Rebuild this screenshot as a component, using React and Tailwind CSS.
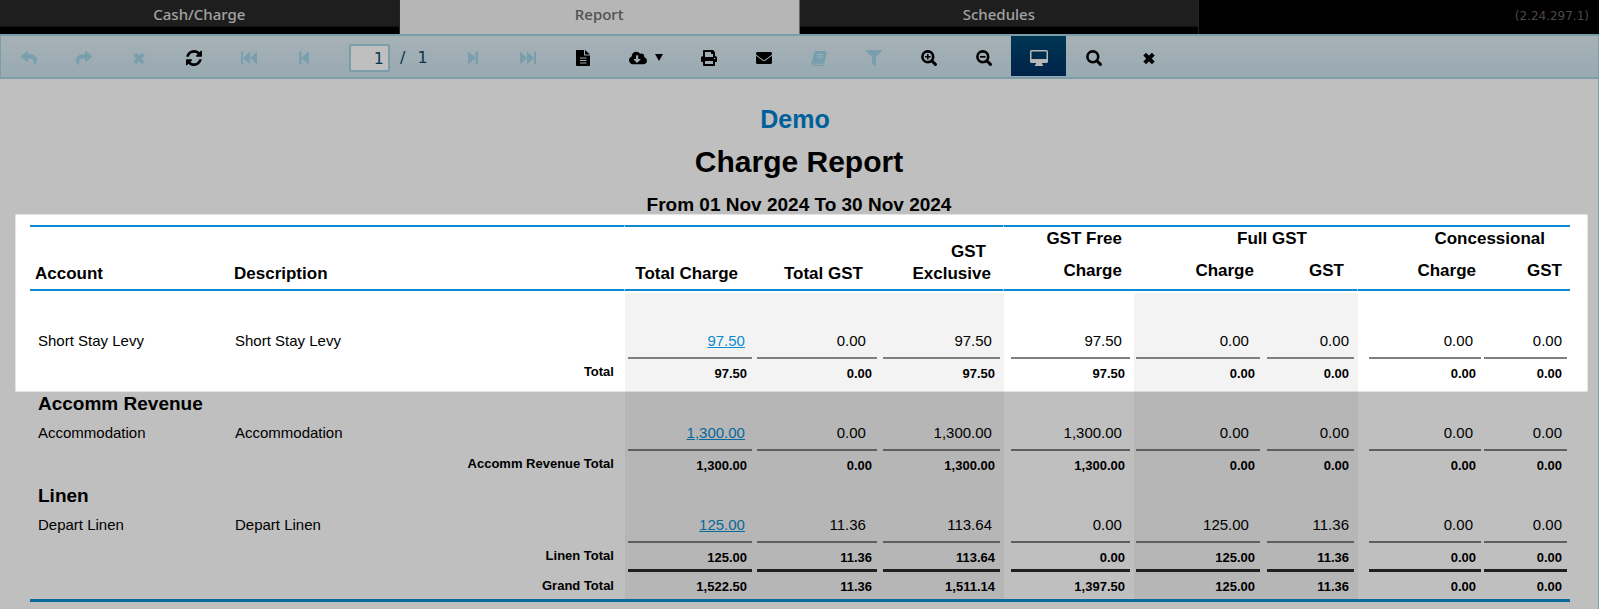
import clsx from 'clsx';
import { FaCloudDownloadAlt, FaEnvelope, FaFilter, FaPrint, FaReply, FaShare } from 'react-icons/fa';

const TABS = [
  { label: 'Cash/Charge' },
  { label: 'Report', active: true },
  { label: 'Schedules' },
];

// One entry per amount column. `rule` insets the underline, `amount` insets the figure above it.
const COLUMNS = [
  { width: 'w-[130px]', rule: 'px-[3px]', amount: 'pr-[7px]', shaded: true },
  { width: 'w-[125px]', rule: 'pl-[2px] pr-[3px]', amount: 'pr-[11px]', shaded: true },
  { width: 'w-[124px]', rule: 'pl-[3px] pr-[4px]', amount: 'pr-[8px]', shaded: true },
  { width: 'w-[130px]', rule: 'pl-[7px] pr-[4px]', amount: 'pr-[8px]' },
  { width: 'w-[131px]', rule: 'pl-[2px] pr-[5px]', amount: 'pr-[11px]', shaded: true },
  { width: 'w-[93px]', rule: 'pl-[2px] pr-[4px]', amount: 'pr-[5px]', shaded: true },
  { width: 'w-[125px]', rule: 'pl-[11px] pr-[2px]', amount: 'pr-[8px]' },
  { width: 'w-[87px]', rule: 'pl-[1px] pr-[3px]', amount: 'pr-[5px]' },
];

const GROUPS = [
  {
    title: '',
    account: 'Short Stay Levy',
    description: 'Short Stay Levy',
    amounts: ['97.50', '0.00', '97.50', '97.50', '0.00', '0.00', '0.00', '0.00'],
    totalLabel: 'Total',
  },
  {
    title: 'Accomm Revenue',
    account: 'Accommodation',
    description: 'Accommodation',
    amounts: ['1,300.00', '0.00', '1,300.00', '1,300.00', '0.00', '0.00', '0.00', '0.00'],
    totalLabel: 'Accomm Revenue Total',
  },
  {
    title: 'Linen',
    account: 'Depart Linen',
    description: 'Depart Linen',
    amounts: ['125.00', '11.36', '113.64', '0.00', '125.00', '11.36', '0.00', '0.00'],
    totalLabel: 'Linen Total',
  },
];

const GRAND_TOTAL = ['1,522.50', '11.36', '1,511.14', '1,397.50', '125.00', '11.36', '0.00', '0.00'];

function RefreshIcon(props) {
  return (
    <svg viewBox="0 0 1536 1536" fill="currentColor" {...props}>
      <path d="M1511 928q0 5-1 7-64 268-268 434.5t-478 166.5q-146 0-282.5-55t-243.5-157l-129 129q-19 19-45 19t-45-19-19-45v-448q0-26 19-45t45-19h448q26 0 45 19t19 45-19 45l-137 137q71 66 161 102t187 36q134 0 250-65t186-179q11-17 53-117 8-23 30-23h192q13 0 22.5 9.5t9.5 22.5zm25-800v448q0 26-19 45t-45 19h-448q-26 0-45-19t-19-45 19-45l138-138q-148-137-349-137-134 0-250 65t-186 179q-11 17-53 117-8 23-30 23h-199q-13 0-22.5-9.5t-9.5-22.5v-7q65-268 270-434.5t480-166.5q146 0 284 55.5t245 156.5l130-129q19-19 45-19t45 19 19 45z" />
    </svg>
  );
}

function CrossIcon(props) {
  return (
    <svg viewBox="0 0 16 16" fill="none" stroke="currentColor" strokeWidth="4" {...props}>
      <path d="M3.7 4.2l8.6 8.6M12.3 4.2l-8.6 8.6" />
    </svg>
  );
}

function FirstIcon(props) {
  return (
    <svg viewBox="0 0 18 16" fill="currentColor" {...props}>
      <path d="M1 1.5h2v13H1zM10 1.5v13L3 8zM17 1.5v13L10 8z" />
    </svg>
  );
}

function PreviousIcon(props) {
  return (
    <svg viewBox="0 0 18 16" fill="currentColor" {...props}>
      <path d="M4 1.5h2.5v13H4zM14 1.5v13L6 8z" />
    </svg>
  );
}

function NextIcon(props) {
  return (
    <svg viewBox="0 0 18 16" fill="currentColor" {...props}>
      <path d="M11.5 1.5H14v13h-2.5zM4 1.5v13L12 8z" />
    </svg>
  );
}

function LastIcon(props) {
  return (
    <svg viewBox="0 0 18 16" fill="currentColor" {...props}>
      <path d="M15 1.5h2v13h-2zM8 1.5v13L15 8zM1 1.5v13L8 8z" />
    </svg>
  );
}

function PageIcon(props) {
  return (
    <svg viewBox="0 0 16 16" fill="currentColor" {...props}>
      <path
        fillRule="evenodd"
        d="M1 0h8v5.5h6V15q0 1-1 1H2q-1 0-1-1zM5 7.5v1h6.5v-1zm0 2.5v1h6.5v-1zm0 2.5v1h6.5v-1z"
      />
      <path d="M10 0l5 4.5h-5z" />
    </svg>
  );
}

function CaretIcon(props) {
  return (
    <svg viewBox="0 0 8 8" fill="currentColor" {...props}>
      <path d="M0 0h8L4 7z" />
    </svg>
  );
}

function BookIcon(props) {
  return (
    <svg viewBox="0 0 16 16" fill="currentColor" {...props}>
      <path
        fillRule="evenodd"
        d="M5 1h9.5q1.500 0 1.200 1.500L13 12.500q-.3 1.200-1.500 1.200H2.800q-.6 0-.4.700.1.400.8.400h9L15 5.500v1L13 15q-.3 1-1.500 1h-9Q.3 16 .3 13.500l3-11Q3.700 1 5 1zM6.300 4L6 5h6.500l.3-1zM5.600 6.500l-.3 1h6.500l.3-1z"
      />
    </svg>
  );
}

function LensIcon({ children, ...props }) {
  return (
    <svg viewBox="0 0 16 16" fill="none" stroke="currentColor" {...props}>
      <circle cx="6.8" cy="6.8" r="5.4" strokeWidth="2.6" />
      <path d="M10.8 10.8l3.600 3.600" strokeWidth="3" strokeLinecap="round" />
      {children}
    </svg>
  );
}

function ZoomInIcon(props) {
  return (
    <LensIcon {...props}>
      <path d="M4 6.8h5.600M6.800 4v5.600" strokeWidth="1.5" />
    </LensIcon>
  );
}

function ZoomOutIcon(props) {
  return (
    <LensIcon {...props}>
      <path d="M4 6.8h5.600" strokeWidth="1.7" />
    </LensIcon>
  );
}

function ScreenIcon(props) {
  return (
    <svg viewBox="0 0 18 16" fill="currentColor" {...props}>
      <path
        fillRule="evenodd"
        d="M1.5 0h15Q18 0 18 1.500v10q0 1.500-1.500 1.500H12v1.500h1V16H5v-1.500h1V13H1.500Q0 13 0 11.500v-10Q0 0 1.500 0zM1.500 1.500V9h15V1.500z"
      />
    </svg>
  );
}

function TabBar() {
  return (
    <nav className="grid h-[34px] grid-cols-4 bg-black font-['Noto_Sans',sans-serif] text-[15px]">
      {TABS.map(({ label, active }) => (
        <a
          key={label}
          href="#"
          className={clsx(
            'flex justify-center border-r pt-[3px] font-medium',
            active
              ? 'border-[#8a8a8a] bg-[#f3f3f3] text-[#6c6c6c]'
              : 'border-[#303030] bg-linear-to-b from-[#292929] from-75% to-black to-85% text-[#d8d8d8]',
          )}
        >
          {label}
        </a>
      ))}
      <span className="pt-2 pr-[10px] text-right font-['DejaVu_Sans',sans-serif] text-xs text-[#685f5f]">
        (2.24.297.1)
      </span>
    </nav>
  );
}

function ToolButton({ icon: Icon, label, disabled, active, children }) {
  return (
    <button
      type="button"
      aria-label={label}
      disabled={disabled}
      className={clsx(
        'flex h-10 items-center justify-center gap-2 pt-1',
        children ? 'w-[71px]' : 'w-[55px]',
        disabled && 'text-[#a2d3e8]',
        active && 'bg-linear-to-b from-[#00486e] to-[#003064] text-[#f4f4f4]',
      )}
    >
      <Icon className="h-4 w-[18px]" />
      {children}
    </button>
  );
}

function Toolbar() {
  return (
    <div className="flex h-[45px] items-start border-x border-y-2 border-[#a4d0e2] bg-linear-to-b from-[#deedf4] to-[#cce3ed] text-black">
      <ToolButton icon={FaReply} label="Back" disabled />
      <ToolButton icon={FaShare} label="Forward" disabled />
      <ToolButton icon={CrossIcon} label="Stop" disabled />
      <ToolButton icon={RefreshIcon} label="Refresh" />
      <ToolButton icon={FirstIcon} label="First page" disabled />
      <ToolButton icon={PreviousIcon} label="Previous page" disabled />
      <div className="flex h-10 w-[114px] items-center gap-[10px] pt-1 pl-[18px] font-['DejaVu_Sans',sans-serif] text-base text-[#0c4a66]">
        <input
          type="text"
          aria-label="Current page"
          defaultValue="1"
          className="h-7 w-[41px] rounded-xs border-2 border-[#a4d0e2] bg-white pr-1 text-right"
        />
        <span className="flex gap-3">
          <span>/</span>
          <span>1</span>
        </span>
      </div>
      <ToolButton icon={NextIcon} label="Next page" disabled />
      <ToolButton icon={LastIcon} label="Last page" disabled />
      <ToolButton icon={PageIcon} label="Page view" />
      <ToolButton icon={FaCloudDownloadAlt} label="Export">
        <CaretIcon className="size-2" />
      </ToolButton>
      <ToolButton icon={FaPrint} label="Print" />
      <ToolButton icon={FaEnvelope} label="Send by email" />
      <ToolButton icon={BookIcon} label="Document map" disabled />
      <ToolButton icon={FaFilter} label="Parameters" disabled />
      <ToolButton icon={ZoomInIcon} label="Zoom in" />
      <ToolButton icon={ZoomOutIcon} label="Zoom out" />
      <ToolButton icon={ScreenIcon} label="Full screen" active />
      <ToolButton icon={LensIcon} label="Search" />
      <ToolButton icon={CrossIcon} label="Close" />
    </div>
  );
}

function AmountCells({ values, ruled, link }) {
  return COLUMNS.map(({ rule, amount, shaded }, i) => (
    <td key={i} className={clsx('p-0 text-right', rule, shaded && 'bg-[#f3f3f3]')}>
      <div
        className={clsx(
          ruled ? 'border-b-2 border-[#7f7f7f] pb-[6px]' : 'pt-[5px] pr-[5px]',
          ruled && amount,
        )}
      >
        {link && i === 0 ? (
          <a href="#" className="text-[#0d8bd0] underline">
            {values[i]}
          </a>
        ) : (
          values[i]
        )}
      </div>
    </td>
  ));
}

function ReportGroup({ title, account, description, amounts, totalLabel }) {
  return (
    <>
      <tr className="h-[34px]">
        <th colSpan={2} scope="rowgroup" className="pt-1 pl-2 text-left text-[19px] leading-6 font-bold">
          {title}
        </th>
        {COLUMNS.map(({ shaded }, i) => (
          <td key={i} className={clsx(shaded && 'bg-[#f3f3f3]')} />
        ))}
      </tr>
      <tr className="h-8 align-bottom text-[15px] leading-5">
        <td className="pb-2 pl-2">{account}</td>
        <td className="pb-2 pl-[6px]">{description}</td>
        <AmountCells values={amounts} ruled link />
      </tr>
      <tr className="h-[26px] align-top text-[13px] leading-5 font-bold">
        <th colSpan={2} scope="row" className="pt-[3px] pr-[11px] text-right">
          {totalLabel}
        </th>
        <AmountCells values={amounts} />
      </tr>
    </>
  );
}

function ReportTable() {
  return (
    <table className="w-full table-fixed border-separate border-spacing-0">
      <colgroup>
        <col className="w-[199px]" />
        <col />
        {COLUMNS.map(({ width }, i) => (
          <col key={i} className={width} />
        ))}
      </colgroup>
      <thead className="text-[17px] leading-[22px] [&_th]:border-[#0d8bd0]">
        <tr className="h-[34px]">
          <th rowSpan={2} className="border-y-2 pb-1 pl-[5px] text-left align-bottom">Account</th>
          <th rowSpan={2} className="border-y-2 border-r border-r-white! pb-1 pl-[5px] text-left align-bottom">Description</th>
          <th rowSpan={2} className="border-y-2 pr-[17px] pb-1 text-right align-bottom">Total Charge</th>
          <th rowSpan={2} className="border-y-2 pr-[17px] pb-1 text-right align-bottom">Total GST</th>
          <th rowSpan={2} className="border-y-2 border-r border-r-white! pr-3 pb-1 text-right align-bottom">
            <span className="block pr-[5px]">GST</span>
            Exclusive
          </th>
          <th className="border-t-2 pt-px pr-3 text-right align-top">GST Free</th>
          <th colSpan={2} className="border-t-2 pt-px pr-[51px] text-right align-top">Full GST</th>
          <th colSpan={2} className="border-t-2 pt-px pr-[25px] text-right align-top">Concessional</th>
        </tr>
        <tr className="h-8">
          <th className="border-b-2 pt-px pr-3 text-right align-top">Charge</th>
          <th className="border-b-2 pt-px pr-[11px] text-right align-top">Charge</th>
          <th className="border-b-2 border-r border-r-white! pt-px pr-[13px] text-right align-top">GST</th>
          <th className="border-b-2 pt-px pr-[7px] text-right align-top">Charge</th>
          <th className="border-b-2 pt-px pr-2 text-right align-top">GST</th>
        </tr>
      </thead>
      <tbody>
        <tr className="h-[2px]">
          <td colSpan={10} className="p-0" />
        </tr>
        {GROUPS.map((group) => (
          <ReportGroup key={group.totalLabel} {...group} />
        ))}
        <tr className="align-top text-[13px] leading-5 font-bold">
          <th colSpan={2} scope="row" className="border-b-3 border-[#0d8bd0] pt-[7px] pr-[11px] text-right">
            Grand Total
          </th>
          {COLUMNS.map(({ rule, shaded }, i) => (
            <td
              key={i}
              className={clsx('border-b-3 border-[#0d8bd0] pb-[2px] text-right', rule, shaded && 'bg-[#f3f3f3]')}
            >
              <div className="border-t-3 border-[#2b2b2b] pt-[5px] pr-[5px]">{GRAND_TOTAL[i]}</div>
            </td>
          ))}
        </tr>
      </tbody>
    </table>
  );
}

export default function App() {
  return (
    <div className="flex min-h-screen flex-col overflow-hidden bg-white font-['Liberation_Sans',Arial,sans-serif] text-black">
      <TabBar />
      <Toolbar />
      <main className="grow border-r border-[#a4d0e2] pt-6">
        <header className="text-center font-bold">
          <p className="pr-2 text-[25px] leading-8 text-[#0080cf]">Demo</p>
          <h1 className="mt-[9px] text-[30px] leading-9">Charge Report</h1>
          <p className="mt-[13px] text-[19px] leading-6">From 01 Nov 2024 To 30 Nov 2024</p>
        </header>
        <div className="relative mt-2 mr-7 ml-[30px]">
          <ReportTable />
          {/* spotlight: everything outside this box is dimmed */}
          <div className="pointer-events-none absolute -top-[11px] -right-[18px] -left-[15px] h-[178px] rounded-xs border border-black/10 shadow-[0_0_0_2000px_rgb(0_0_0/0.25)]" />
        </div>
      </main>
    </div>
  );
}
